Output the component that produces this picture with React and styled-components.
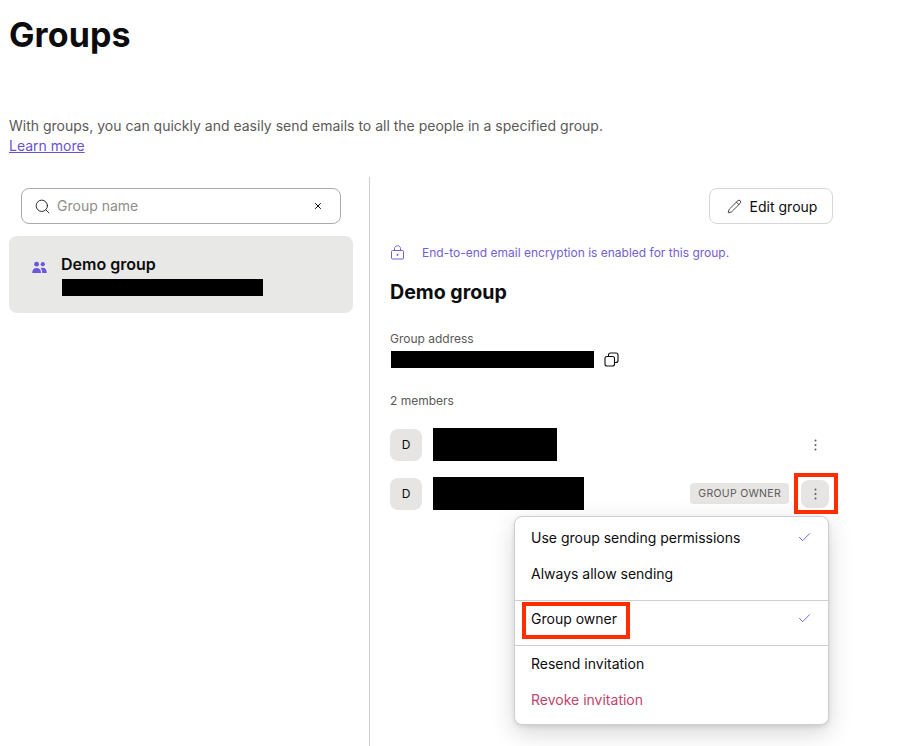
import React from "react";
import styled, { createGlobalStyle } from "styled-components";
import { Search, X, Pencil, Check } from "lucide-react";

const GlobalStyle = createGlobalStyle`
  html, body {
    margin: 0;
    padding: 0;
    background: #fff;
    height: 746px;
    overflow: hidden;
  }
  * { box-sizing: border-box; }
  body {
    font-family: Inter, "Liberation Sans", sans-serif;
    color: #0c0c0e;
  }
`;

const Page = styled.div`
  height: 746px;
  display: flex;
  flex-direction: column;
`;

const Header = styled.header`
  height: 177px;
  padding: 15px 0 0 9px;
`;

const Title = styled.h1`
  margin: 0;
  font-size: 34px;
  line-height: 40px;
  font-weight: 700;
  letter-spacing: 0.1px;
`;

const Intro = styled.p`
  margin: 61px 0 0;
  font-size: 14px;
  line-height: 20px;
  color: #5c5958;
`;

const LearnMore = styled.a`
  color: #6a52d4;
  text-decoration: underline;
`;

const Columns = styled.div`
  flex: 1;
  display: flex;
`;

const Sidebar = styled.aside`
  width: 370px;
  padding: 11px 16px 0 9px;
  border-right: 1px solid #d1cfcd;
`;

const SearchBox = styled.div`
  margin: 0 12px;
  height: 36px;
  display: flex;
  align-items: center;
  gap: 6px;
  padding: 0 17px 0 12px;
  border: 1px solid #adaba8;
  border-radius: 8px;
  font-size: 14px;
  line-height: 34px;
  color: #8f8d8a;
`;

const SearchLabel = styled.span`
  flex: 1;
  margin-top: -1px;
`;

const GroupItem = styled.div`
  margin-top: 12px;
  height: 77px;
  display: flex;
  align-items: flex-start;
  padding: 18px 0 0 23px;
  background: #e8e8e7;
  border-radius: 8px;
`;

const GroupIcon = styled.svg`
  width: 15px;
  height: 13px;
  margin: 7px 14px 0 0;
  fill: #6d55e0;
  flex: none;
`;

const GroupName = styled.div`
  font-size: 16px;
  line-height: 20px;
  font-weight: 600;
`;

const Redacted = styled.div`
  width: ${(p) => p.$width}px;
  height: ${(p) => p.$height}px;
  background: #000;
  flex: none;
`;

const GroupAddressBar = styled(Redacted)`
  margin: 5px 0 0 1px;
`;

const Details = styled.main`
  position: relative;
  width: 463px;
  padding: 11px 0 0 20px;
`;

const Actions = styled.div`
  display: flex;
  justify-content: flex-end;
`;

const EditButton = styled.button`
  width: 124px;
  height: 36px;
  display: flex;
  align-items: center;
  justify-content: center;
  gap: 8px;
  padding: 0 0 0 2px;
  background: #fff;
  border: 1px solid #d8d7d5;
  border-radius: 8px;
  font: inherit;
  font-size: 14px;
  color: #0c0c0e;
`;

const Notice = styled.div`
  margin-top: 19px;
  height: 18px;
  display: flex;
  align-items: center;
  gap: 17px;
  font-size: 12px;
  color: #7360d2;
`;

const LineIcon = styled.svg`
  width: ${(p) => p.$size || 15}px;
  height: ${(p) => p.$size || 15}px;
  fill: none;
  stroke: currentColor;
  stroke-width: 1;
  flex: none;
`;

const GroupTitle = styled.h2`
  margin: 19px 0 0;
  font-size: 19.6px;
  line-height: 24px;
  font-weight: 700;
`;

const SmallLabel = styled.div`
  font-size: 12px;
  line-height: 16px;
  color: #5c5958;
`;

const AddressLabel = styled(SmallLabel)`
  margin-top: 27px;
`;

const AddressRow = styled.div`
  margin: 4px 0 0 1px;
  display: flex;
  align-items: center;
  gap: 10px;
`;

const MembersLabel = styled(SmallLabel)`
  margin-top: 25px;
`;

const MemberList = styled.div`
  margin-top: 19px;
  display: flex;
  flex-direction: column;
  gap: 16px;
`;

const MemberRow = styled.div`
  height: 33px;
  display: flex;
  align-items: center;
`;

const Avatar = styled.div`
  width: 32px;
  height: 32px;
  margin-right: 11px;
  display: flex;
  align-items: center;
  justify-content: center;
  background: #e6e5e3;
  border-radius: 8px;
  font-size: 12px;
`;

const Badge = styled.span`
  margin-left: auto;
  height: 21px;
  padding: 0 8px;
  display: flex;
  align-items: center;
  background: #e6e5e3;
  border-radius: 4px;
  font-size: 10.5px;
  letter-spacing: 0.3px;
  color: #5c5958;
`;

const MoreButton = styled.button`
  width: 28px;
  height: 28px;
  margin-left: ${(p) => (p.$auto ? "auto" : "12px")};
  margin-right: 4px;
  padding: 0;
  display: flex;
  align-items: center;
  justify-content: center;
  background: ${(p) => (p.$active ? "#e6e5e3" : "transparent")};
  border: none;
  border-radius: 8px;
  color: #5c5958;
`;

const DotsIcon = styled.svg`
  width: 3px;
  height: 12px;
  fill: currentColor;
`;

const Menu = styled.div`
  position: absolute;
  left: 144px;
  top: 339px;
  width: 315px;
  height: 209px;
  padding-top: 2px;
  background: #fff;
  border: 1px solid #d1cfcd;
  border-radius: 8px;
  box-shadow: 0 8px 24px rgba(0, 0, 0, 0.16), 0 2px 4px rgba(0, 0, 0, 0.1);
`;

const MenuSection = styled.div`
  padding-bottom: 9px;
  & + & {
    border-top: 1px solid #d1cfcd;
  }
  & + & > :first-child {
    margin-top: -1px;
  }
`;

const MenuItem = styled.div`
  height: 36px;
  display: flex;
  align-items: center;
  justify-content: space-between;
  padding: 0 16px;
  font-size: 14px;
  color: ${(p) => (p.$danger ? "#c2446c" : "#0c0c0e")};
`;

const Annotation = styled.div`
  position: absolute;
  left: ${(p) => p.$left}px;
  top: ${(p) => p.$top}px;
  width: ${(p) => p.$width}px;
  height: ${(p) => p.$height}px;
  border: 4px solid #ff2e00;
  pointer-events: none;
`;

const Dots = () => (
  <DotsIcon viewBox="0 0 3 12">
    <circle cx="1.5" cy="1.5" r="1" />
    <circle cx="1.5" cy="6" r="1" />
    <circle cx="1.5" cy="10.5" r="1" />
  </DotsIcon>
);

export default function App() {
  return (
    <Page>
      <GlobalStyle />
      <Header>
        <Title>Groups</Title>
        <Intro>
          With groups, you can quickly and easily send emails to all the people in a specified group.
          <br />
          <LearnMore href="#">Learn more</LearnMore>
        </Intro>
      </Header>
      <Columns>
        <Sidebar>
          <SearchBox>
            <Search size={17} strokeWidth={1.2} color="#0c0c0e" />
            <SearchLabel>Group name</SearchLabel>
            <X size={10} strokeWidth={2.4} color="#0c0c0e" />
          </SearchBox>
          <GroupItem>
            <GroupIcon viewBox="0 0 15 13">
              <circle cx="4.6" cy="3.2" r="2.4" />
              <circle cx="10.8" cy="3.2" r="2.1" />
              <path d="M0.2 12 C0.2 8.6 2 7 4.6 7 C7.2 7 9 8.6 9 12 Z" />
              <path d="M10.2 12 C10.2 9.8 9.7 8.2 8.6 7.2 C9.2 6.9 10 6.8 10.8 6.8 C13.2 6.8 14.8 8.6 14.8 12 Z" />
            </GroupIcon>
            <div>
              <GroupName>Demo group</GroupName>
              <GroupAddressBar $width={201} $height={17} />
            </div>
          </GroupItem>
        </Sidebar>
        <Details>
          <Actions>
            <EditButton>
              <Pencil size={15} strokeWidth={1.2} />
              Edit group
            </EditButton>
          </Actions>
          <Notice>
            <LineIcon viewBox="0 0 15 15">
              <path d="M4.5 5.5 V3.6 C4.5 1.9 5.8 0.8 7.5 0.8 C9.2 0.8 10.5 1.9 10.5 3.6 V5.5" />
              <path d="M2.5 5.5 H12.5 C13.1 5.5 13.5 5.9 13.5 6.5 V13 C13.5 13.6 13.1 14 12.5 14 H2.5 C1.9 14 1.5 13.6 1.5 13 V6.5 C1.5 5.9 1.9 5.5 2.5 5.5 Z" />
              <path d="M7.5 8.8 V10.8" strokeWidth="1.6" />
            </LineIcon>
            End-to-end email encryption is enabled for this group.
          </Notice>
          <GroupTitle>Demo group</GroupTitle>
          <AddressLabel>Group address</AddressLabel>
          <AddressRow>
            <Redacted $width={203} $height={17} />
            <LineIcon viewBox="0 0 15 15">
              <rect x="1" y="4.5" width="9.5" height="9.5" rx="2" strokeWidth="1.1" />
              <path d="M4.5 4.5 V3 C4.5 1.9 5.4 1 6.5 1 H12 C13.1 1 14 1.9 14 3 V8.5 C14 9.6 13.1 10.5 12 10.5 H10.5" strokeWidth="1.1" />
            </LineIcon>
          </AddressRow>
          <MembersLabel>2 members</MembersLabel>
          <MemberList>
            <MemberRow>
              <Avatar>D</Avatar>
              <Redacted $width={124} $height={33} />
              <MoreButton $auto>
                <Dots />
              </MoreButton>
            </MemberRow>
            <MemberRow>
              <Avatar>D</Avatar>
              <Redacted $width={151} $height={33} />
              <Badge>GROUP OWNER</Badge>
              <MoreButton $active>
                <Dots />
              </MoreButton>
            </MemberRow>
          </MemberList>
          <Menu>
            <MenuSection>
              <MenuItem>
                Use group sending permissions
                <Check size={15} strokeWidth={1.5} color="#6d55e0" />
              </MenuItem>
              <MenuItem>Always allow sending</MenuItem>
            </MenuSection>
            <MenuSection>
              <MenuItem>
                Group owner
                <Check size={15} strokeWidth={1.5} color="#6d55e0" />
              </MenuItem>
            </MenuSection>
            <MenuSection>
              <MenuItem>Resend invitation</MenuItem>
              <MenuItem $danger>Revoke invitation</MenuItem>
            </MenuSection>
          </Menu>
          <Annotation $left={424} $top={296} $width={44} $height={41} />
          <Annotation $left={152} $top={425} $width={108} $height={37} />
        </Details>
      </Columns>
    </Page>
  );
}
